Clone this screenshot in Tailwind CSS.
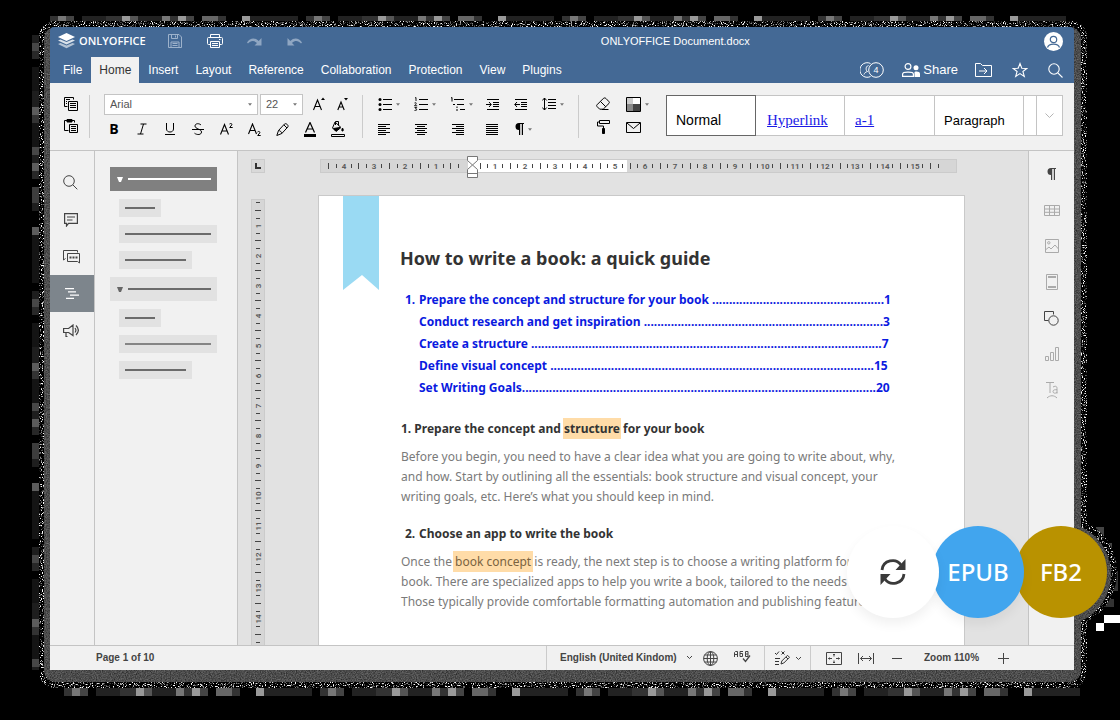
<!DOCTYPE html>
<html lang="en">
<head>
<meta charset="utf-8">
<meta name="viewport" content="width=device-width, initial-scale=1">
<title>ONLYOFFICE Document.docx</title>
<script src="https://cdn.jsdelivr.net/npm/@tailwindcss/browser@4"></script>
</head>
<body class="relative h-screen overflow-hidden bg-black pt-[27px] pr-[46px] pb-[50px] pl-[50px] font-['Liberation_Sans',Arial,sans-serif] text-[#444]">

<svg class="absolute size-0" aria-hidden="true">
  <filter id="speckle" x="0" y="0" width="100%" height="100%" color-interpolation-filters="sRGB">
    <feTurbulence type="fractalNoise" baseFrequency="0.9" numOctaves="2" seed="4"/>
    <feColorMatrix values="6 0 0 0 -3.3  6 0 0 0 -3.3  6 0 0 0 -3.3  0 0 0 0 1"/>
    <feComposite in2="SourceGraphic" operator="in"/>
  </filter>
  <filter id="grain" x="0" y="0" width="100%" height="100%" color-interpolation-filters="sRGB">
    <feTurbulence type="fractalNoise" baseFrequency="0.8" numOctaves="2" seed="9"/>
    <feColorMatrix values=".4 0 0 0 .1  .4 0 0 0 .1  .4 0 0 0 .1  0 0 0 0 1"/>
    <feComposite in2="SourceGraphic" operator="in"/>
  </filter>
</svg>

<div class="relative flex h-full flex-col">

  <!-- backdrop: block fringe, speckled rim, grey rim -->
  <div aria-hidden="true">
    <svg class="absolute -top-[11px] -left-2 h-2 w-full"><defs><pattern id="blocksX" width="256" height="8" patternUnits="userSpaceOnUse"></pattern></defs><rect width="100%" height="8" fill="url(#blocksX)"/></svg>
    <svg class="absolute -bottom-[26px] left-[6px] h-2 w-full"><rect width="100%" height="8" fill="url(#blocksX)"/></svg>
    <svg class="absolute top-0 -left-[18px] h-full w-2 opacity-60"><defs><pattern id="blocksY" width="8" height="256" patternUnits="userSpaceOnUse"></pattern></defs><rect width="8" height="100%" fill="url(#blocksY)"/></svg>
    <svg class="absolute -right-[46px] bottom-[39px] h-[104px] w-6"><path fill="#444" d="M0 0h8v8H0zM8 16h8v24H8z"/><path fill="#888" d="M0 8h8v8H0z"/><path fill="#fff" d="M0 96h8v8H0zM8 88h16v8H8z"/><path fill="#333" d="M14 44h8v20h-8zM8 72h10v8H8z"/></svg>
    <div class="absolute -top-[6px] -right-[13px] -bottom-[18px] -left-[11px] rounded-2xl bg-white [filter:url(#speckle)]"></div>
    <div class="absolute -right-[43px] bottom-[42px] size-28 rounded-full bg-white [filter:url(#speckle)]"></div>
    <div class="absolute top-0 -right-[7px] -bottom-[12px] -left-[6px] rounded-xl bg-white [filter:url(#grain)]"></div>
    <div class="absolute -right-[37px] bottom-[44px] size-[104px] rounded-full bg-white [filter:url(#grain)]"></div>
  </div>

  <header class="relative rounded-t bg-[#446995] text-white">
    <div class="flex h-[30px] items-center pr-[11px] pb-[2px] pl-2">
      <a href="#" class="flex items-center gap-1 font-['Open_Sans',sans-serif] text-[11px] font-semibold">
        <svg class="h-4 w-[17px]" viewBox="0 0 17 16" fill="#fff"><path opacity=".6" d="M0 11l2.500-1 6 2.600 6-2.600 2.500 1-8.500 4.200z"/><path opacity=".8" d="M0 7.500l2.500-1 6 2.600 6-2.600 2.500 1-8.500 4.100z"/><path d="M8.500 0L17 4 8.500 8 0 4z"/></svg>
        ONLYOFFICE</a>
      <div class="ml-[9px] flex">
        <button aria-label="Save" class="grid h-6 w-10 place-items-center"><svg class="size-[14px]" viewBox="0 0 14 14" fill="none" stroke="#9db2cb"><path d="M.5.500h10.500l2.500 2.500v10.500H.5zM3.500.500v4h6v-4M7.500 1.500v2M3 13.500V8h8v5.500M4.500 9.500h5M4.500 11.500h5"/></svg></button>
        <button aria-label="Print" class="grid h-6 w-10 place-items-center"><svg class="h-[14px] w-4" viewBox="0 0 16 14" fill="none" stroke="#fff"><path d="M3.500 3.500v-3h9v3M3.500 10.500h-2a1 1 0 0 1-1-1v-5a1 1 0 0 1 1-1h13a1 1 0 0 1 1 1v5a1 1 0 0 1-1 1h-2M3.500 7.500h9v6h-9zM5 9.500h6M5 11.500h6M12 5.500h1.500"/></svg></button>
        <button aria-label="Redo" class="grid h-6 w-10 place-items-center"><svg class="h-[9px] w-[15px]" viewBox="0 0 15 9" fill="#8fa6c2"><path d="M14.500 1v7.500H7.500L10 6C7 3 3.500 3.500 1 6.500L0 5.500C3 .8 8 .2 11.700 4z"/></svg></button>
        <button aria-label="Undo" class="grid h-6 w-10 place-items-center"><svg class="h-[9px] w-[15px]" viewBox="0 0 15 9" fill="#8fa6c2"><path d="M.5 1v7.500h7L5 6c3-3 6.500-2.500 9 .5l1-1C12 .8 7 .2 3.300 4z"/></svg></button>
      </div>
      <h1 class="flex-1 pr-2 text-center text-[11px]">ONLYOFFICE Document.docx</h1>
      <button aria-label="Account" class="rounded-full"><svg class="size-[19px]" viewBox="0 0 19 19"><circle cx="9.500" cy="9.500" r="9.500" fill="#fff"/><g fill="none" stroke="#446995" stroke-width="1.200"><circle cx="9.500" cy="7.500" r="3.200"/><path d="M3.500 15.500c1.200-4.600 10.800-4.600 12 0"/></g></svg></button>
    </div>
    <div class="flex h-[26px] items-center pr-2 pl-[5px]">
      <nav class="flex h-full gap-px text-xs leading-[26px] [&_a]:px-2">
        <a href="#">File</a><a href="#" aria-current="page" class="bg-[#f1f1f1] text-[#333]">Home</a><a href="#">Insert</a><a href="#">Layout</a><a href="#">Reference</a><a href="#">Collaboration</a><a href="#">Protection</a><a href="#">View</a><a href="#">Plugins</a>
      </nav>
      <div class="ml-auto flex items-center">
        <button aria-label="4 people editing"><svg class="h-4 w-6" viewBox="0 0 24 16" fill="none" stroke="#fff"><path d="M10.500 1.500A7.300 7.300 0 1 0 10.500 14.500M8.500 3.500c-3.500 1-2.500 5.500-1 6-2 .5-3 1.500-3.500 3"/><circle cx="16" cy="8" r="7.300"/><text x="16" y="11" text-anchor="middle" fill="#fff" stroke="none" class="text-[9px]">4</text></svg></button>
        <button class="ml-[18px] flex items-center gap-[3px] text-[13px]"><svg class="h-[14px] w-[18px]" viewBox="0 0 18 14"><g fill="none" stroke="#fff" stroke-width="1.200"><circle cx="6" cy="3.500" r="2.900"/><path d="M.6 13.400V11c0-2.500 10.800-2.500 10.800 0v2.400z"/></g><circle cx="14" cy="4.800" r="2.500" fill="#fff"/><path fill="#fff" d="M12.500 14V9c2-1 5.500-.4 5.500 1.700V14z"/></svg>Share</button>
        <button aria-label="Open file location" class="ml-[17px]"><svg class="h-[14px] w-[17px]" viewBox="0 0 17 14" fill="none" stroke="#fff"><path d="M.5.500h5l2 2h9v11H.5zM4 8h8M9 5l3 3-3 3"/></svg></button>
        <button aria-label="Mark as favorite" class="ml-5"><svg class="size-4" viewBox="0 0 16 16" fill="none" stroke="#fff" stroke-width="1.100"><path d="M8 1.500l1.800 4.700 5 .2-3.900 3.100 1.400 4.900L8 11.600l-4.300 2.800 1.400-4.900-3.900-3.100 5-.2z"/></svg></button>
        <button aria-label="Search" class="ml-5 pr-[3px]"><svg class="size-[15px]" viewBox="0 0 15 15" fill="none" stroke="#fff" stroke-width="1.100"><circle cx="6" cy="6" r="5.200"/><path d="M9.800 9.800l4.700 4.700"/></svg></button>
      </div>
    </div>
  </header>

  <!-- toolbar -->
  <div role="toolbar" aria-label="Home" class="relative flex h-[68px] shrink-0 border-b border-[#c4c4c4] bg-[#f1f1f1] pt-[10px] text-black [&_button]:flex [&_button]:h-[22px] [&_button]:items-center">
    <div class="mt-[2px] mb-3 w-10 shrink-0 border-r border-[#cbcbcb] pl-[14px]">
      <div class="-mt-[2px] flex flex-col">
      <button aria-label="Copy"><svg class="size-[14px]" viewBox="0 0 14 14" fill="none" stroke="#000"><path d="M3.500 9.500h-3v-9h9v2M2 2.500h4M2 4.500h1M2 6.500h1"/><path d="M4.500 4.500h9v9h-9zM6 6.500h6M6 8.500h6M6 10.500h6"/></svg></button>
      <button aria-label="Paste"><svg class="size-[14px]" viewBox="0 0 14 14" fill="none" stroke="#000"><path d="M4.500 11.500h-4v-10h10v2"/><path fill="#000" d="M3 .500h5v2.500H3z"/><path d="M5.500 5.500h8v8h-8zM7 7.500h5M7 9.500h5M7 11.500h5"/></svg></button>
      </div>
    </div>

    <div class="mt-[2px] mb-3 ml-[9px] flex w-[264px] shrink-0 flex-col gap-[3px] border-r border-[#cbcbcb]">
      <div class="-mt-[2px] flex items-center pl-[5px]">
        <label class="relative flex"><select aria-label="Font" class="h-[21px] w-[154px] appearance-none border border-[#c4c4c4] bg-white pl-[5px] text-[11px] text-[#555]"><option>Arial</option></select><svg class="absolute top-[9px] right-[6px] h-[3px] w-1" viewBox="0 0 5 3"><path fill="#777" d="M0 0h5L2.500 3z"/></svg></label>
        <label class="relative ml-[2px] flex"><select aria-label="Font size" class="h-[21px] w-[43px] appearance-none border border-[#c4c4c4] bg-white pl-[5px] text-[11px] text-[#555]"><option>22</option></select><svg class="absolute top-[9px] right-[6px] h-[3px] w-1" viewBox="0 0 5 3"><path fill="#777" d="M0 0h5L2.500 3z"/></svg></label>
        <button aria-label="Increase font size" class="ml-[10px]"><svg class="h-[14px] w-3" viewBox="0 0 12 14"><path fill="none" stroke="#000" stroke-width="1.100" d="M.5 13L4.500 3l4 10M2 9.500h5"/><path d="M8 3h4L10 .5z"/></svg></button>
        <button aria-label="Decrease font size" class="ml-3"><svg class="h-[14px] w-3" viewBox="0 0 12 14"><path fill="none" stroke="#000" stroke-width="1.100" d="M.8 13L4 5l3.200 8M2 10h4"/><path d="M7 1h4L9 3.500z"/></svg></button>
      </div>
      <div class="ml-px grid w-[252px] grid-cols-9 [&>button]:justify-center">
        <button aria-label="Bold" class="font-['Open_Sans',sans-serif] text-sm font-bold">B</button>
        <button aria-label="Italic"><svg class="size-3" viewBox="0 0 12 12" fill="none" stroke="#000"><path d="M4.500 1h6M1.500 11h6M7.500 1l-3 10"/></svg></button>
        <button aria-label="Underline"><svg class="size-3" viewBox="0 0 12 12" fill="none" stroke="#000"><path d="M2.500 0v6c0 4 7 4 7 0V0M1 11.500h10"/></svg></button>
        <button aria-label="Strikethrough"><svg class="size-3" viewBox="0 0 12 12" fill="none" stroke="#000"><path d="M9 2C7 0 3 .3 3 3c0 3 6.500 3 6.500 6 0 3-4.500 3.200-7 1.200M0 6.500h12"/></svg></button>
        <button aria-label="Superscript"><svg class="h-3 w-[13px]" viewBox="0 0 13 12" fill="none" stroke="#000"><path stroke-width="1.100" d="M.5 11.500L4.500 1.500l4 10M2 8h5"/><path d="M9.500 1c1-1 3-.5 2.200 1L9.700 4.500h3"/></svg></button>
        <button aria-label="Subscript"><svg class="h-[13px] w-[13px]" viewBox="0 0 13 13" fill="none" stroke="#000"><path stroke-width="1.100" d="M.5 11L4.500 1l4 10M2 7.500h5"/><path d="M9.500 9c1-1 3-.5 2.200 1L9.700 12.500h3"/></svg></button>
        <button aria-label="Highlight color"><svg class="size-[13px]" viewBox="0 0 13 13" fill="none" stroke="#000"><path d="M2.500 7.500l6-6.500c1.500-1.200 4.500 1.300 3.300 3l-6 6.500-5 2zM8 2l3 3M2.500 7.500c1.500 0 3.300 1.500 3.300 3"/></svg></button>
        <button aria-label="Font color"><svg class="h-[15px] w-3" viewBox="0 0 12 15"><path fill="none" stroke="#000" stroke-width="1.200" d="M1.500 10.500L6 .500l4.500 10M3 7h6"/><path d="M0 12h12v3H0z"/></svg></button>
        <button aria-label="Paragraph fill"><svg class="h-4 w-[14px]" viewBox="0 0 14 16" fill="none" stroke="#000"><path d="M4 1l6 5.500-5 4L1.500 7zM4.500 4V.500h3v4"/><path fill="#000" d="M2.500 7.500l6.500-1-4 3.500zM11.500 7c1.200 2 1 3 0 3s-1-1 0-3z"/><path d="M.5 13.500h13v2H.5z"/></svg></button>
      </div>
    </div>

    <div class="mt-[2px] mb-3 flex w-[216px] shrink-0 flex-col gap-[3px] border-r border-[#cbcbcb] pl-[15px]">
      <div class="-mt-[2px] grid grid-cols-[36px_36px_36px_28px_28px_28px] [&>button]:gap-[4px]">
        <button aria-label="Bullets"><svg class="h-[14px] w-[14px]" viewBox="0 0 14 14"><path stroke="#000" d="M5 2.500h9M5 7.500h9M5 12.500h9"/><circle cx="2" cy="2.500" r="1.500"/><circle cx="2" cy="7.500" r="1.500"/><circle cx="2" cy="12.500" r="1.500"/></svg><svg class="h-[3px] w-1" viewBox="0 0 5 3"><path fill="#777" d="M0 0h5L2.500 3z"/></svg></button>
        <button aria-label="Numbering"><svg class="h-[14px] w-[14px]" viewBox="0 0 14 14" fill="none" stroke="#000"><path d="M5 2.500h9M5 7.500h9M5 12.500h9"/><path stroke-width=".9" d="M1 1l1-.5v3.500M.5 6c2-1 2.500.5 0 2.800h2.700M.5 10.500h2.200L1.500 12c2 0 1.500 2-1 1.500"/></svg><svg class="h-[3px] w-1" viewBox="0 0 5 3"><path fill="#777" d="M0 0h5L2.500 3z"/></svg></button>
        <button aria-label="Multilevel list"><svg class="h-[14px] w-[15px]" viewBox="0 0 15 14" fill="none" stroke="#000"><path d="M4 2.500h10M7 7.500h7M10 12.500h5M1 1l1-.5v4M3 7.500h2M7 9.500v1.500M7 12v2"/></svg><svg class="h-[3px] w-1" viewBox="0 0 5 3"><path fill="#777" d="M0 0h5L2.500 3z"/></svg></button>
        <button aria-label="Increase indent"><svg class="h-[13px] w-[14px]" viewBox="0 0 14 13" fill="none" stroke="#000"><path d="M1 1.500h12M7 4.500h6M7 6.500h6M7 8.500h6M1 11.500h12M0 6.500h5M3 4l2.300 2.500L3 9"/></svg></button>
        <button aria-label="Decrease indent"><svg class="h-[13px] w-[14px]" viewBox="0 0 14 13" fill="none" stroke="#000"><path d="M1 1.500h12M7 4.500h6M7 6.500h6M7 8.500h6M1 11.500h12M1 6.500h5M3 4L.7 6.500 3 9"/></svg></button>
        <button aria-label="Line spacing"><svg class="h-[14px] w-[14px]" viewBox="0 0 14 14" fill="none" stroke="#000"><path d="M6 2.500h8M6 5.500h8M6 8.500h8M6 11.500h8M2.500 1v12M.3 3.500L2.500 1l2.200 2.500M.3 10.500L2.500 13l2.200-2.500"/></svg><svg class="h-[3px] w-1" viewBox="0 0 5 3"><path fill="#777" d="M0 0h5L2.500 3z"/></svg></button>
      </div>
      <div class="grid grid-cols-[36px_36px_36px_28px_28px_28px] [&>button]:gap-[3px]">
        <button aria-label="Align left"><svg class="h-[11px] w-3" viewBox="0 0 12 11" stroke="#000"><path d="M0 .500h12M0 2.500h8M0 4.500h12M0 6.500h8M0 8.500h12M0 10.500h8"/></svg></button>
        <button aria-label="Align center" class="pl-px"><svg class="h-[11px] w-3" viewBox="0 0 12 11" stroke="#000"><path d="M0 .500h12M2 2.500h8M0 4.500h12M2 6.500h8M0 8.500h12M2 10.500h8"/></svg></button>
        <button aria-label="Align right" class="pl-[2px]"><svg class="h-[11px] w-3" viewBox="0 0 12 11" stroke="#000"><path d="M0 .500h12M4 2.500h8M0 4.500h12M4 6.500h8M0 8.500h12M4 10.500h8"/></svg></button>
        <button aria-label="Justify"><svg class="h-[11px] w-3" viewBox="0 0 12 11" stroke="#000"><path d="M0 .500h12M0 2.500h12M0 4.500h12M0 6.500h12M0 8.500h12M0 10.500h12"/></svg></button>
        <button aria-label="Nonprinting characters" class="pl-px"><svg class="h-3 w-[9px]" viewBox="0 0 9 12"><path d="M4 0a3.500 3.500 0 0 0 0 7v5h1.200V1h1.600v11H8V1h1V0z"/></svg><svg class="ml-px h-[3px] w-1" viewBox="0 0 5 3"><path fill="#777" d="M0 0h5L2.500 3z"/></svg></button>
      </div>
    </div>

    <div class="flex w-[87px] shrink-0 flex-col gap-px pl-[17px]">
      <div class="flex">
        <button aria-label="Clear style" class="w-[30px]"><svg class="size-[14px]" viewBox="0 0 14 14" fill="none" stroke="#000"><path d="M7.500 1.300L1 7.800c-.5.500-.5 1.200 0 1.700l2.700 2.700h3.500l5.800-5.800c.5-.5.500-1.200 0-1.700l-3-3.200c-.7-.6-1.800-.8-2.500-.2zM4.500 4.500l5.300 5.300M6 12.500h6.500"/></svg></button>
        <button aria-label="Color scheme" class="gap-1"><svg class="size-[15px]" viewBox="0 0 15 15"><path fill="#ccc" d="M1 1h6v6H1z"/><path fill="#fff" d="M7 1h7v6H7z"/><path fill="#888" d="M1 7h6v7H1z"/><path fill="#444" d="M7 7h7v7H7z"/><path fill="none" stroke="#000" d="M.5.500h14v14H.5z"/></svg><svg class="h-[3px] w-1" viewBox="0 0 5 3"><path fill="#777" d="M0 0h5L2.500 3z"/></svg></button>
      </div>
      <div class="flex">
        <button aria-label="Copy style" class="w-[30px] pl-px"><svg class="h-[14px] w-[13px]" viewBox="0 0 13 14" fill="none" stroke="#000"><path d="M2.500.500h10v3h-10zM2.500 2H.500v4h6v2"/><path fill="#000" d="M5.500 8.500h2v5h-2z"/></svg></button>
        <button aria-label="Mail merge"><svg class="h-[11px] w-[15px]" viewBox="0 0 15 11" fill="none" stroke="#000"><path d="M.5.500h14v10H.5zM1 1l6.500 5.500L14 1"/></svg></button>
      </div>
    </div>

    <div class="mt-[2px] mr-[11px] flex h-[41px] flex-1 border border-[#c4c4c4] bg-white [&>button]:h-[39px] [&>button]:border-r [&>button]:border-[#c4c4c4] [&>button]:pt-[10px] [&>button]:pl-[9px]">
      <button class="-my-px -ml-px h-[41px]! w-[90px] border! border-[#666]! pt-2! text-sm">Normal</button>
      <button class="w-[89px] pl-[11px]! font-['Liberation_Serif',serif] text-[15px] text-[#1a1ae6] underline">Hyperlink</button>
      <button class="w-[90px] pl-[10px]! font-['Liberation_Serif',serif] text-[15px] text-[#1a1ae6] underline">a-1</button>
      <button class="w-[89px] text-[13px]">Paragraph</button>
      <button aria-label="Next style" class="flex-1"></button>
      <button aria-label="More styles" class="w-[25px] justify-center border-r-0! p-0!"><svg class="h-[5px] w-[9px]" viewBox="0 0 9 5" fill="none" stroke="#b5b5b5"><path d="M.5.500l4 4 4-4"/></svg></button>
    </div>
  </div>

  <!-- workspace -->
  <div class="relative flex min-h-0 flex-1 bg-[#e2e2e2]">
    <nav aria-label="Left panel" class="flex w-[45px] shrink-0 flex-col border-r border-[#c4c4c4] bg-[#f1f1f1] pt-[13px] [&>button]:grid [&>button]:h-[37px] [&>button]:place-items-center">
      <button aria-label="Find" class="pr-[3px]"><svg class="size-[15px]" viewBox="0 0 15 15" fill="none" stroke="#444"><circle cx="6" cy="6" r="5.300"/><path d="M9.800 9.800l4.500 4.500"/></svg></button>
      <button aria-label="Comments" class="pr-[3px]"><svg class="size-[14px]" viewBox="0 0 14 14" fill="none" stroke="#444" stroke-width="1.200"><path d="M.6.600h12.800v9.800H4.500L2.500 13v-2.600H.6zM3 4h8M3 7h5.500"/></svg></button>
      <button aria-label="Chat" class="pr-[2px]"><svg class="h-[15px] w-[17px]" viewBox="0 0 17 15" fill="none" stroke="#444"><path d="M2.500 9.500L.5 11V1.500h14v2M4.500 4.500h12v9.500l-2-1.500h-10z"/><path stroke-width="1.800" d="M6.500 8.500h2M9.500 8.500h2M12.500 8.500h2"/></svg></button>
      <button aria-label="Headings" class="bg-[#7d858c]"><svg class="h-[11px] w-[14px]" viewBox="0 0 14 11" stroke="#fff" stroke-width="1.200"><path d="M0 .600h9M3 3.800h8M5 7.200h9M1 10.400h8"/></svg></button>
      <button aria-label="Feedback" class="pr-[3px]"><svg class="h-[13px] w-4" viewBox="0 0 16 13" fill="none" stroke="#444" stroke-width="1.200"><path d="M.6 4.500h5L10 1v10.500L5.600 8.500h-5zM3 8.500v4h1.500M12 4c1.200 1.500 1.200 3 0 4.500M13 1.500c3 3 3 6.500 0 9.500"/></svg></button>
    </nav>

    <aside aria-label="Document outline" class="flex w-[143px] shrink-0 flex-col gap-2 border-r border-[#c4c4c4] bg-[#f1f1f1] pt-4 pr-5 pl-[15px] [&>div]:flex [&>div]:items-center [&_hr]:h-[2px] [&_hr]:flex-1 [&_hr]:border-0 [&_hr]:bg-[#6b6b6b]">
      <div class="h-6 gap-[5px] bg-[#808080] pr-[6px] pl-[7px]"><svg class="h-[5px] w-[6px]" viewBox="0 0 6 5"><path fill="#fff" d="M0 0h6L4 5H2z"/></svg><hr class="bg-white!"></div>
      <div class="ml-[9px] h-[18px] w-[42px] bg-[#e2e2e2] px-[6px]"><hr></div>
      <div class="ml-[9px] h-[18px] bg-[#e2e2e2] px-[6px]"><hr></div>
      <div class="ml-[9px] h-[18px] w-[73px] bg-[#e2e2e2] px-[6px]"><hr></div>
      <div class="h-6 gap-[5px] bg-[#e2e2e2] pr-[6px] pl-[7px]"><svg class="h-[5px] w-[6px]" viewBox="0 0 6 5"><path fill="#666" d="M0 0h6L4 5H2z"/></svg><hr></div>
      <div class="ml-[9px] h-[18px] w-[42px] bg-[#e2e2e2] px-[6px]"><hr></div>
      <div class="ml-[9px] h-[18px] bg-[#e2e2e2] px-[6px]"><hr class="bg-[#858585]!"></div>
      <div class="ml-[9px] h-[18px] w-[73px] bg-[#e2e2e2] px-[6px]"><hr></div>
    </aside>

    <main class="flex min-w-0 flex-1 overflow-hidden border-r border-[#c4c4c4]">
      <div class="ml-[13px] flex w-[14px] shrink-0 flex-col pt-2">
        <button aria-label="Tab stop" class="grid size-[14px] shrink-0 place-items-center border border-[#cbcbcb] bg-[#d9d9d9]"><svg class="size-[6px]" viewBox="0 0 6 6" fill="none" stroke="#333" stroke-width="2"><path d="M1 0v5h5"/></svg></button>
        <svg id="rulerY" class="mt-[26px] w-[14px] flex-1 border border-b-0 border-[#cbcbcb] bg-[#d6d6d6] font-[Roboto,sans-serif] text-[8px] font-semibold"></svg>
      </div>
      <div class="ml-[53px] flex w-[647px] shrink-0 flex-col pt-2">
        <svg id="rulerX" class="ml-[2px] h-[14px] w-[637px] shrink-0 overflow-visible bg-[#d6d6d6] font-[Roboto,sans-serif] text-[8px] font-semibold"></svg>
        <article class="relative mt-[22px] flex-1 overflow-hidden border border-b-0 border-[#c9c9c9] bg-white pt-12 pl-[82px] font-['Noto_Sans','Open_Sans',sans-serif] text-xs text-[#333]">
          <svg class="absolute top-0 left-6 h-[94px] w-9" viewBox="0 0 36 94"><path fill="#9adaf3" d="M0 0h36v94L19 79 0 94z"/></svg>
          <h2 class="-ml-px text-lg/7 font-bold">How to write a book: a quick guide</h2>
          <nav aria-label="Contents" class="mt-[17px] pl-1 font-bold whitespace-nowrap text-[#0a1ae0] [&_a]:flex [&_a]:h-[22px] [&_a]:items-center">
            <a href="#s1"><span class="w-[14px]">1.</span>Prepare the concept and structure for your book ...................................................1</a>
            <a href="#s1" class="pl-[14px]">Conduct research and get inspiration .......................................................................3</a>
            <a href="#s1" class="pl-[14px]">Create a structure ........................................................................................................7</a>
            <a href="#s1" class="pl-[14px]">Define visual concept ................................................................................................15</a>
            <a href="#s1" class="pl-[14px]">Set Writing Goals.........................................................................................................20</a>
          </nav>
          <h3 id="s1" class="mt-5 text-xs/5 font-bold">1. Prepare the concept and <mark class="-mx-px bg-[#ffdca8] px-px py-[2px] text-inherit">structure</mark> for your book</h3>
          <p class="mt-2 text-xs/5 font-[365] whitespace-nowrap text-[#7a7a7a]">Before you begin, you need to have a clear idea what you are going to write about, why,<br>and how. Start by outlining all the essentials: book structure and visual concept, your<br>writing goals, etc. Here’s what you should keep in mind.</p>
          <h3 class="mt-[17px] flex pl-1 text-xs/5 font-bold"><span class="w-[14px]">2.</span>Choose an app to write the book</h3>
          <p class="mt-2 text-xs/5 font-[365] whitespace-nowrap text-[#7a7a7a]">Once the <mark class="-mx-[2px] bg-[#ffdca8] px-[2px] py-[2px] text-[#7a6340]">book concept</mark> is ready, the next step is to choose a writing platform for<br>book. There are specialized apps to help you write a book, tailored to the needs of<br>Those typically provide comfortable formatting automation and publishing features</p>
        </article>
      </div>
    </main>

    <nav aria-label="Right panel" class="flex w-[45px] shrink-0 flex-col bg-[#f1f1f1] pt-[5px] [&>button]:grid [&>button]:h-9 [&>button]:place-items-center">
      <button aria-label="Paragraph settings"><svg class="h-3 w-[9px]" viewBox="0 0 9 12" fill="#444"><path d="M4 0a3.500 3.500 0 0 0 0 7v5h1.200V1h1.600v11H8V1h1V0z"/></svg></button>
      <button aria-label="Table settings"><svg class="h-[11px] w-4" viewBox="0 0 16 11" fill="none" stroke="#aaa"><path d="M.5.500h15v10H.5zM.5 4h15M.5 7.300h15M5.500.500v10M10.500.500v10"/></svg></button>
      <button aria-label="Image settings"><svg class="size-[14px]" viewBox="0 0 14 14" fill="none" stroke="#aaa"><path d="M.5.500h13v13H.5zM1 10.500l3-2.500 2 2 4-4 3.500 4"/><circle cx="3.800" cy="3.800" r="1.200"/></svg></button>
      <button aria-label="Header and footer settings"><svg class="h-4 w-3" viewBox="0 0 12 16" fill="none" stroke="#aaa"><path d="M.5.500h11v15H.5z"/><path stroke-width="2" d="M2 3h8M2 13h8"/></svg></button>
      <button aria-label="Shape settings"><svg class="size-[15px]" viewBox="0 0 15 15" fill="none" stroke="#444"><path d="M4.500 9.500h-4v-9h9v3"/><circle cx="9.500" cy="9.500" r="4.700"/></svg></button>
      <button aria-label="Chart settings"><svg class="size-[14px]" viewBox="0 0 14 14" fill="none" stroke="#aaa"><path d="M.5 9.500h3v4h-3zM5.500 5.500h3v8h-3zM10.500.500h3v13h-3z"/></svg></button>
      <button aria-label="Text Art settings"><svg class="h-[17px] w-[14px]" viewBox="0 0 14 17" fill="none" stroke="#aaa"><path d="M1 .500h8M5 .500v10.500M8 5c3-1.500 4-.5 4 1.500v4c-1.500 1-4 1-4-1s2.500-1.800 4-1.800M12 10v1.500M2 16c3-3 7-3 10 0"/></svg></button>
    </nav>
  </div>

  <!-- status bar -->
  <footer class="relative flex h-[25px] shrink-0 items-center border-t border-[#c4c4c4] bg-[#f1f1f1] text-[10px] font-bold [&_button]:flex [&_button]:items-center">
    <span class="ml-[46px] pb-px">Page 1 of 10</span>
    <div class="ml-auto flex h-full w-[528px] items-center border-l border-[#cbcbcb] pl-[13px]">
      <button class="w-[143px] justify-between pr-[11px] pb-px whitespace-nowrap">English (United Kindom)<svg class="h-[3px] w-[5px]" viewBox="0 0 5 3" fill="none" stroke="#444"><path d="M0 0l2.500 2.500L5 0"/></svg></button>
      <button aria-label="Document language"><svg class="size-[15px]" viewBox="0 0 15 15" fill="none" stroke="#444"><circle cx="7.500" cy="7.500" r="6.900"/><ellipse cx="7.500" cy="7.500" rx="3.300" ry="6.900"/><path d="M7.500.500v14M.5 7.500h14M1.500 4h12M1.500 11h12"/></svg></button>
      <button aria-label="Spell checking" class="ml-4 pb-[2px]"><svg class="h-3 w-[17px]" viewBox="0 0 17 12" fill="none" stroke="#444"><path d="M.5 6V1.500l1-1h2v5.500M.5 3.500h3M9 .500H6v5h2.500v-3H6M11.500.500h2.500v5h-2.500zM11.500 3h2.500"/><path stroke-width="1.300" d="M9 7.500l2.500 3 4.500-6"/></svg></button>
      <div class="ml-[13px] flex h-full w-[47px] items-center justify-center border-x border-[#cbcbcb]"><button aria-label="Track changes" class="gap-[6px]"><svg class="h-[14px] w-[15px]" viewBox="0 0 15 14" fill="none" stroke="#333"><path d="M0 2l1.500 1.500L4 .500M6.500.500l3 3M9.500.500l-3 3M0 7.500h5M0 10.500h4M0 13.500h4M6 13l.8-3 5.700-5.700 2 2-5.700 5.700zM11 6l2 2"/></svg><svg class="h-[3px] w-[5px]" viewBox="0 0 5 3" fill="none" stroke="#444"><path d="M0 0l2.500 2.500L5 0"/></svg></button></div>
      <button aria-label="Fit to page" class="ml-[15px]"><svg class="h-[13px] w-4" viewBox="0 0 16 13" fill="none" stroke="#444"><path d="M.5.500h15v12H.5zM8 2v2.500M8 8.500V11M2.500 6.500H6M10 6.500h3.500M7 3l1-1 1 1M7 10l1 1 1-1M3.500 5.500l-1 1 1 1M12.500 5.500l1 1-1 1"/></svg></button>
      <button aria-label="Fit to width" class="ml-4"><svg class="h-[11px] w-4" viewBox="0 0 16 11" fill="none" stroke="#444"><path d="M.5 0v11M15.500 0v11M2.500 5.500h11M5 3L2.500 5.500 5 8M11 3l2.500 2.500L11 8"/></svg></button>
      <button aria-label="Zoom out" class="ml-[18px]"><svg class="h-[11px] w-[10px]" viewBox="0 0 10 11" stroke="#444"><path d="M0 5.500h10"/></svg></button>
      <span class="ml-[22px] w-[58px] pb-px">Zoom 110%</span>
      <button aria-label="Zoom in" class="ml-4"><svg class="size-[11px]" viewBox="0 0 11 11" stroke="#444"><path d="M0 5.500h11M5.500 0v11"/></svg></button>
    </div>
  </footer>

  <!-- format badges -->
  <div class="absolute -right-[33px] bottom-[52px] flex font-['Noto_Sans','Open_Sans',sans-serif] text-2xl font-medium text-white [&>button]:grid [&>button]:size-[92px] [&>button]:place-items-center [&>button]:rounded-full">
    <button aria-label="Convert" class="z-20 bg-white shadow-[0_6px_12px_rgba(0,0,0,0.06)]"><svg class="h-[26px] w-[26px]" viewBox="0 0 26 26" fill="none" stroke="#3a3a3a" stroke-width="2.800"><path d="M2 11C3 1 16-1.500 21 6M24 15C23 25 10 27.500 5 20"/><path fill="#3a3a3a" stroke="none" d="M25.500 0v11H15.500zM.5 26V15h10z"/></svg></button>
    <button class="z-10 -ml-[7px] bg-[#41a5ee] shadow-[0_6px_12px_rgba(0,0,0,0.06)]">EPUB</button>
    <button class="-ml-[9px] bg-[#b99200]">FB2</button>
  </div>
</div>

<script>
const NS = 'http://www.w3.org/2000/svg';
function add(parent, tag, attrs, text) {
  const el = document.createElementNS(NS, tag);
  for (const k in attrs) el.setAttribute(k, attrs[k]);
  if (text !== undefined) el.textContent = text;
  parent.appendChild(el);
}

// fringe blocks, 32 cells of 8px
[...'03740222339522273940663009222222'].forEach((c, i) => {
  add(document.getElementById('blocksX'), 'rect', { x: i * 8, y: 0, width: 8, height: 8, fill: '#' + c + c + c });
  add(document.getElementById('blocksY'), 'rect', { x: 0, y: i * 8, width: 8, height: 8, fill: '#' + c + c + c });
});

// horizontal ruler
const rx = document.getElementById('rulerX');
add(rx, 'rect', { x: 0.5, y: 0.5, width: 636, height: 13, fill: 'none', stroke: '#cbcbcb' });
add(rx, 'rect', { x: 148, y: 1, width: 159, height: 12, fill: '#fff' });
const tickX = (x, h) => add(rx, 'rect', { x, y: 7 - h / 2, width: 1, height: h, fill: '#444' });
const numX = (x, n) => add(rx, 'text', { x, y: 10, 'text-anchor': 'middle', fill: '#555' }, n);
for (let n = 1; n <= 15; n++) {
  const x = 175 + 30 * (n - 1);
  tickX(x - 15, 6); tickX(x - 8, 4); tickX(x + 7, 4); numX(x, n);
}
tickX(610, 6); tickX(618, 4); tickX(138, 4); tickX(130, 6);
for (let n = 1; n <= 4; n++) {
  const x = 116 - 31 * (n - 1) + (n > 3 ? 1 : 0);
  tickX(x + 7, 4); tickX(x - 8, 4); tickX(x - 16, 6); numX(x, n);
}
add(rx, 'path', { d: 'M147.500-2.500h10v4l-5 4.500-5-4.500zM147.500 18.500v-8l5-4.500 5 4.500v8zM147.500 14.500h10', fill: '#fff', stroke: '#777' });

// vertical ruler
const ry = document.getElementById('rulerY');
const tickY = (y, w) => add(ry, 'rect', { x: 6 - w / 2, y, width: w, height: 1, fill: '#444' });
tickY(2, 4);
for (let n = 1; n <= 14; n++) {
  const y = 26 + 30 * (n - 1) + Math.max(0, n - 11);
  tickY(y - 16, 6); tickY(y - 8, 4); tickY(y + 7, 4);
  add(ry, 'text', { x: 0, y: 3, 'text-anchor': 'middle', fill: '#555', transform: `translate(6 ${y}) rotate(-90)` }, n);
}
tickY(434, 6); tickY(442, 4);
</script>
</body>
</html>
